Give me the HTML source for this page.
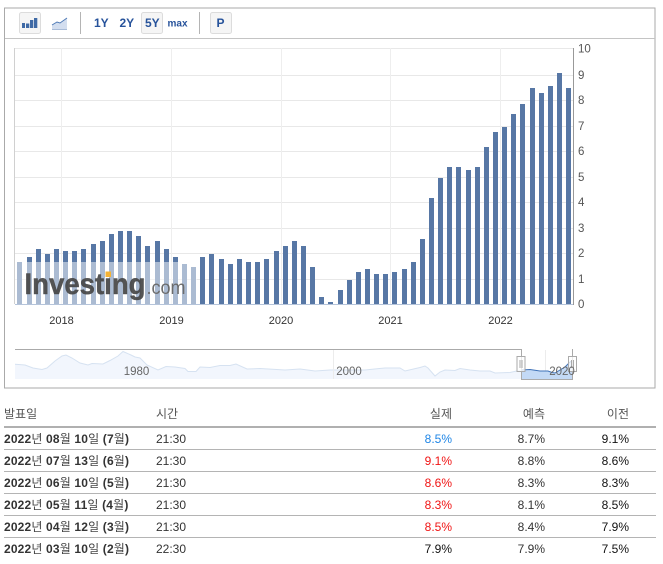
<!DOCTYPE html>
<html><head><meta charset="utf-8">
<style>
html,body{margin:0;padding:0;background:#fff;width:663px;height:564px;overflow:hidden}
body{position:relative;font-family:"Liberation Sans","Noto Sans CJK KR",sans-serif;}
svg{position:absolute;left:0;top:0}
.r{position:absolute;left:0;width:663px;height:22px;font-size:12px;line-height:22px;color:#333}
.r span{position:absolute;white-space:nowrap;top:0}
.d{left:4px;font-weight:bold;color:#333;letter-spacing:.16px}
.d i{font-style:normal;font-weight:400;color:#444;font-size:12px}
.t{left:156px}
.a{right:211px}
.f{right:118px}
.p{right:34px;color:#111}
.h{color:#555;font-size:12px}
</style></head>
<body>
<svg width="663" height="564" viewBox="0 0 663 564" xmlns="http://www.w3.org/2000/svg" font-family="'Liberation Sans',sans-serif">
<rect x="4.5" y="8" width="650.5" height="380" fill="#fff" stroke="#aaa" stroke-width="1"/>
<path d="M5 38.5H655" stroke="#c4c4c4"/>
<!-- toolbar -->
<rect x="19.5" y="12.5" width="21" height="21" rx="2" fill="#f5f5f5" stroke="#dcdcdc"/>
<path d="M22 23h3v5h-3zM26 23.500h3.300v4.500h-3.300zM30 20h3.300v8h-3.300zM34 18h3.300v10h-3.300z" fill="#3f6aa6"/>
<path d="M52 30v-5l5-3 3 1 7-5v12z" fill="#d3deef"/>
<path d="M52 25l5-3 3 1 7-5" fill="none" stroke="#4f7ab6" stroke-width="1"/>
<path d="M52 29.500h15" stroke="#a9bcd8"/>
<path d="M80.500 12v22M199.500 12v22" stroke="#b4b4b4"/>
<rect x="141.500" y="12.500" width="21" height="21" rx="2" fill="#f5f5f5" stroke="#dcdcdc"/>
<rect x="210.500" y="12.500" width="21" height="21" rx="2" fill="#f5f5f5" stroke="#dcdcdc"/>
<g font-weight="bold" fill="#27539b" font-size="12">
<text x="94" y="27">1Y</text>
<text x="119.500" y="27">2Y</text>
<text x="145" y="27">5Y</text>
<text x="167.500" y="26.500" font-size="10">max</text>
<text x="216.500" y="27">P</text>
</g>
<!-- grid -->
<path d="M15 48.500H573M15 75.500H573M15 100.500H573M15 126.500H573M15 151.500H573M15 177.500H573M15 202.500H573M15 228.500H573M15 253.500H573M15 279.500H573" stroke="#e8e8e8"/>
<path d="M61.500 48V304M171.500 48V304M281.500 48V304M390.500 48V304M500.500 48V304" stroke="#eeeeee"/>
<path d="M14.500 48V304" stroke="#d0d0d0"/>
<!-- bars -->
<path fill="#5777a5" d="M17 262h5v42h-5zM27 257h5v47h-5zM36 249h5v55h-5zM45 254h5v50h-5zM54 249h5v55h-5zM63 251h5v53h-5zM72 251h5v53h-5zM81 249h5v55h-5zM91 244h5v60h-5zM100 241h5v63h-5zM109 234h5v70h-5zM118 231h5v73h-5zM127 231h5v73h-5zM136 236h5v68h-5zM145 246h5v58h-5zM155 241h5v63h-5zM164 249h5v55h-5zM173 257h5v47h-5zM182 264h5v40h-5zM191 267h5v37h-5zM200 257h5v47h-5zM209 254h5v50h-5zM219 259h5v45h-5zM228 264h5v40h-5zM237 259h5v45h-5zM246 262h5v42h-5zM255 262h5v42h-5zM264 259h5v45h-5zM274 251h5v53h-5zM283 246h5v58h-5zM292 241h5v63h-5zM301 246h5v58h-5zM310 267h5v37h-5zM319 297h5v7h-5zM328 302h5v2h-5zM338 290h5v14h-5zM347 280h5v24h-5zM356 272h5v32h-5zM365 269h5v35h-5zM374 274h5v30h-5zM383 274h5v30h-5zM392 272h5v32h-5zM402 269h5v35h-5zM411 262h5v42h-5zM420 239h5v65h-5zM429 198h5v106h-5zM438 178h5v126h-5zM447 167h5v137h-5zM456 167h5v137h-5zM466 170h5v134h-5zM475 167h5v137h-5zM484 147h5v157h-5zM493 132h5v172h-5zM502 127h5v177h-5zM511 114h5v190h-5zM520 104h5v200h-5zM530 88h5v216h-5zM539 93h5v211h-5zM548 86h5v218h-5zM557 73h5v231h-5zM566 88h5v216h-5z"/>
<!-- watermark -->
<rect x="15" y="262" width="182" height="42" fill="#fff" fill-opacity=".5"/>
<text x="24.500" y="294" font-size="30" font-weight="bold" fill="#474747" fill-opacity=".93" stroke="#474747" stroke-width=".5" stroke-opacity=".8" textLength="121" lengthAdjust="spacingAndGlyphs">Investing</text>
<rect x="105.500" y="271.500" width="5.500" height="5.500" fill="#f5b335"/>
<text x="146.500" y="294" font-size="19" fill="#6c6c6c" textLength="39" lengthAdjust="spacingAndGlyphs">.com</text>
<!-- axes -->
<path d="M15 304.500H573" stroke="#b5c4da"/>
<path d="M573.500 48V305" stroke="#999"/>
<g font-size="11.500" fill="#555">
<text x="578" y="52.500">10</text><text x="578" y="79">9</text><text x="578" y="104">8</text><text x="578" y="130">7</text><text x="578" y="155">6</text><text x="578" y="181">5</text><text x="578" y="206">4</text><text x="578" y="232">3</text><text x="578" y="257">2</text><text x="578" y="283">1</text><text x="578" y="308">0</text>
</g>
<g font-size="11" fill="#333" text-anchor="middle">
<text x="61.500" y="324">2018</text><text x="171.500" y="324">2019</text><text x="281" y="324">2020</text><text x="390.500" y="324">2021</text><text x="500.500" y="324">2022</text>
</g>
<!-- navigator -->
<path d="M15 364.300L25 365 33 368 42 369.500 47 368 55 361 62 356 66 355 72 358 80 363 88 365 92 363.500 103 364 110 360.500 118 356 123 351.500 131 355 135 357 140 358 147 365 158 370 166 366.500 175 367 185 368.500 188 371.500 196 371.500 200 367 210 367.500 220 365.500 230 365.500 236 364 247 369 260 368.500 285 370 300 369 315 371 330 370 350 370 365 370 385 368 400 368 405 371 420 367.500 425 366 428 368 435 376 440 372 445 370 455 370.500 460 368.500 470 370 480 371 490 371 495 373 510 372.500 521 370V379H15Z" fill="#f2f6fd"/>
<path d="M15 364.300L25 365 33 368 42 369.500 47 368 55 361 62 356 66 355 72 358 80 363 88 365 92 363.500 103 364 110 360.500 118 356 123 351.500 131 355 135 357 140 358 147 365 158 370 166 366.500 175 367 185 368.500 188 371.500 196 371.500 200 367 210 367.500 220 365.500 230 365.500 236 364 247 369 260 368.500 285 370 300 369 315 371 330 370 350 370 365 370 385 368 400 368 405 371 420 367.500 425 366 428 368 435 376 440 372 445 370 455 370.500 460 368.500 470 370 480 371 490 371 495 373 510 372.500 521 370" fill="none" stroke="#d6e2f1"/>
<path d="M333.500 350V379M545.500 350V379" stroke="#ececec"/>
<path d="M521 370L530 369.500 540 371 548 371 552 372.500 555 373 560 370 565 367 570 362 572 361V379H521Z" fill="#c3d9f5"/>
<path d="M521 370L530 369.500 540 371 548 371 552 372.500 555 373 560 370 565 367 570 362 572 361" fill="none" stroke="#3f72b8"/>
<path d="M15 349.500H521.500V379.500H572.500V349" fill="none" stroke="#aaa"/>
<g fill="#fff" fill-opacity=".75" stroke="#aaa">
<rect x="517" y="356.500" width="8" height="15"/>
<rect x="568.500" y="356.500" width="8" height="15"/>
</g>
<path d="M520 360v8M522 360v8M571.500 360v8M573.500 360v8" stroke="#aaa"/>
<g font-size="11.500" fill="#666" text-anchor="middle">
<text x="136.500" y="375">1980</text><text x="349" y="375">2000</text><text x="562" y="375">2020</text>
</g>
<!-- table lines -->
<rect x="4" y="426" width="652" height="2" fill="#b0b0b0"/>
<path d="M4 449.500H656M4 471.500H656M4 493.500H656M4 515.500H656M4 537.500H656" stroke="#b4b4b4"/>
</svg>

<div class="r h" style="top:403px"><span style="left:4px" class="h">발표일</span><span style="left:156px" class="h">시간</span><span class="a h">실제</span><span class="f h">예측</span><span class="p h" style="color:#555">이전</span></div>

<div class="r" style="top:428px"><span class="d">2022<i>년</i> 08<i>월</i> 10<i>일</i> (7<i>월</i>)</span><span class="t">21:30</span><span class="a" style="color:#1e85e6">8.5%</span><span class="f">8.7%</span><span class="p">9.1%</span></div>
<div class="r" style="top:450px"><span class="d">2022<i>년</i> 07<i>월</i> 13<i>일</i> (6<i>월</i>)</span><span class="t">21:30</span><span class="a" style="color:#f01414">9.1%</span><span class="f">8.8%</span><span class="p">8.6%</span></div>
<div class="r" style="top:472px"><span class="d">2022<i>년</i> 06<i>월</i> 10<i>일</i> (5<i>월</i>)</span><span class="t">21:30</span><span class="a" style="color:#f01414">8.6%</span><span class="f">8.3%</span><span class="p">8.3%</span></div>
<div class="r" style="top:494px"><span class="d">2022<i>년</i> 05<i>월</i> 11<i>일</i> (4<i>월</i>)</span><span class="t">21:30</span><span class="a" style="color:#f01414">8.3%</span><span class="f">8.1%</span><span class="p">8.5%</span></div>
<div class="r" style="top:516px"><span class="d">2022<i>년</i> 04<i>월</i> 12<i>일</i> (3<i>월</i>)</span><span class="t">21:30</span><span class="a" style="color:#f01414">8.5%</span><span class="f">8.4%</span><span class="p">7.9%</span></div>
<div class="r" style="top:538px"><span class="d">2022<i>년</i> 03<i>월</i> 10<i>일</i> (2<i>월</i>)</span><span class="t">22:30</span><span class="a" style="color:#111">7.9%</span><span class="f">7.9%</span><span class="p">7.5%</span></div>
</body></html>
